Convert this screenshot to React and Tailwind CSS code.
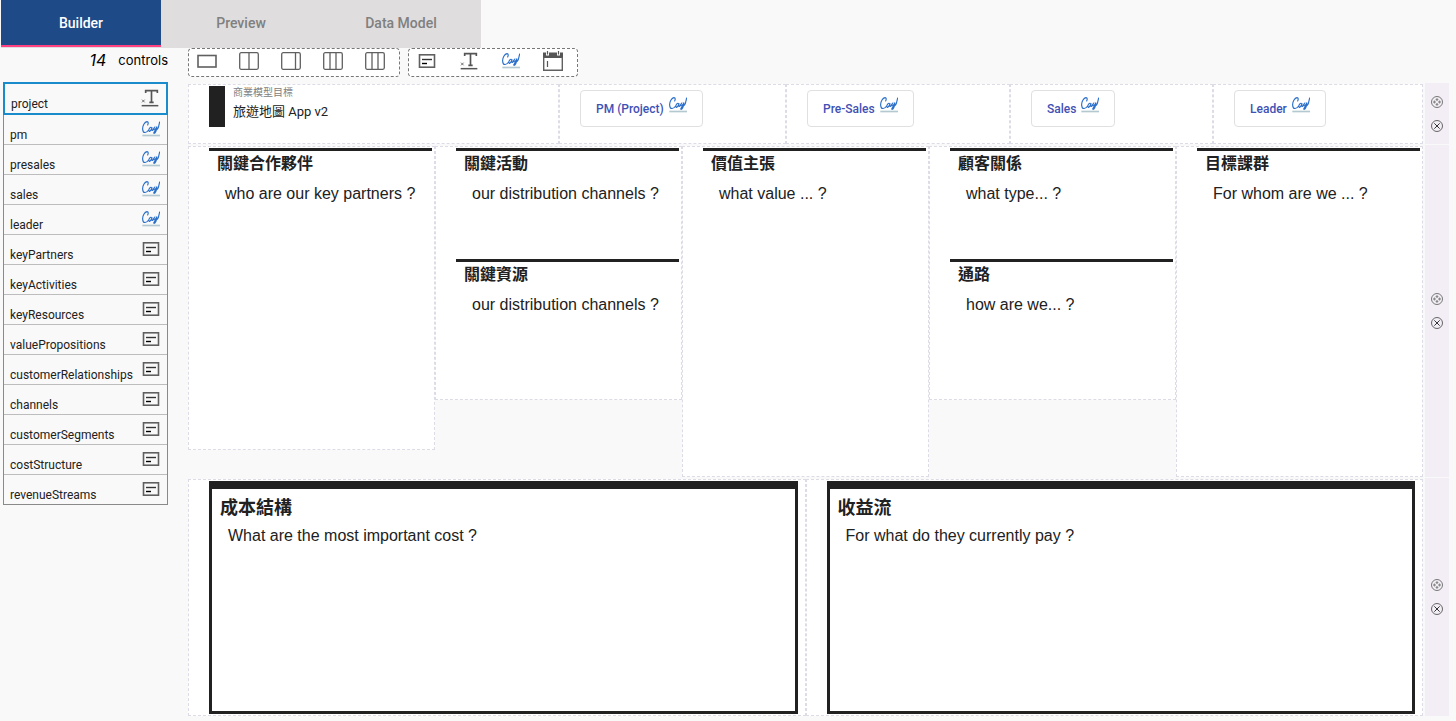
import React, { useState } from 'react'

const SignIcon = () => (
  <svg width="18" height="16" viewBox="0 0 54 48" fill="none">
    <path d="M17 12 C19 8 20 2 15 2 C8 3 1 14 2 25 C3 37 12 38 20 27 M30 20 C25 16 19 24 21 30 C23 34 28 27 30 20 C29 27 29 30 32 28 C34 26 35 22 37 20 C35 27 37 28 40 25 L45 17 C44 25 40 37 36 37 C33 36 39 29 43 27 C46 25 48 23 49 20 M53 3 L49 20" stroke="#2a6fc9" strokeWidth="3.400" strokeLinecap="round" />
    <path d="M1 43.500 H54" stroke="#b3c8cf" strokeWidth="5" />
  </svg>
)

const TextIcon = () => (
  <svg width="18" height="18" viewBox="0 0 54 54" fill="none" stroke="#555">
    <path d="M14 12 V5 H49 V12 M31.500 5 V40 M25 40 H38" strokeWidth="5" />
    <path d="M3 32 L11 40 M11 32 L3 40" strokeWidth="2.500" />
    <path d="M2 50 H52" strokeWidth="4.500" />
  </svg>
)

const AreaIcon = () => (
  <svg width="18" height="14" viewBox="0 0 18 14" fill="none">
    <rect x="1.500" y="0.800" width="15" height="12.400" stroke="#606060" strokeWidth="1.600" />
    <path d="M4 5.500 H14" stroke="#333" strokeWidth="1.400" />
    <path d="M4 9.500 H9" stroke="#000" strokeWidth="1.400" />
  </svg>
)

const DateIcon = () => (
  <svg width="20" height="20" viewBox="0 0 20 20" fill="none">
    <path d="M0 1.500 H3 V4.500 H6 V1.500 H14 V4.500 H17 V1.500 H20 V7 H0 Z" fill="#555" />
    <path d="M0.700 6 V19.300 H19.300 V6" stroke="#606060" strokeWidth="1.400" />
    <path d="M4.500 0 V3.500 M15.500 0 V3.500 M4.500 10 V16" stroke="#555" strokeWidth="1.200" />
  </svg>
)

const LayoutIcon = ({ lines, small }) => (
  <svg width="20" height="18" viewBox="0 0 20 18" fill="none" stroke="#606060" strokeWidth="1.300">
    {small
      ? <rect x="1" y="3.500" width="18" height="11.500" strokeWidth="1.600" />
      : <rect x="0.700" y="0.700" width="18.600" height="16.600" rx="1.500" />}
    {lines.map(x => <path key={x} d={`M${x} 1 V17`} />)}
  </svg>
)

const MoveIcon = () => (
  <svg width="12" height="12" viewBox="0 0 36 36" fill="none" stroke="#777">
    <circle cx="18" cy="18" r="16.500" strokeWidth="3" />
    <path d="M18 6 L23 11 L18 15 L13 11 Z M18 21 L23 25 L18 30 L13 25 Z M10 13 L15 18 L10 23 L6 18 Z M26 13 L30 18 L26 23 L21 18 Z" fill="#888" stroke="none" />
  </svg>
)

const RemoveIcon = () => (
  <svg width="12" height="12" viewBox="0 0 36 36" fill="none">
    <circle cx="18" cy="18" r="16.500" stroke="#666" strokeWidth="3" />
    <path d="M10 10 L26 26 M26 10 L10 26" stroke="#333" strokeWidth="3" />
  </svg>
)

const ICONS = { text: TextIcon, sign: SignIcon, area: AreaIcon, date: DateIcon }

const controls = [
  { name: 'project', type: 'text' },
  { name: 'pm', type: 'sign' },
  { name: 'presales', type: 'sign' },
  { name: 'sales', type: 'sign' },
  { name: 'leader', type: 'sign' },
  { name: 'keyPartners', type: 'area' },
  { name: 'keyActivities', type: 'area' },
  { name: 'keyResources', type: 'area' },
  { name: 'valuePropositions', type: 'area' },
  { name: 'customerRelationships', type: 'area' },
  { name: 'channels', type: 'area' },
  { name: 'customerSegments', type: 'area' },
  { name: 'costStructure', type: 'area' },
  { name: 'revenueStreams', type: 'area' },
]

const layouts = [
  { name: 'One column', lines: [], small: true },
  { name: 'Two columns', lines: [10] },
  { name: 'Main and side', lines: [14.5] },
  { name: 'Three columns', lines: [7, 13] },
  { name: 'Four columns', lines: [7, 13] },
]

const signers = ['PM (Project)', 'Pre-Sales', 'Sales', 'Leader']

const columns = [
  [{ id: 'keyPartners', title: '關鍵合作夥伴', text: 'who are our key partners ?', height: 'h-[273px]' }],
  [
    { id: 'keyActivities', title: '關鍵活動', text: 'our distribution channels ?', height: 'h-[83px]' },
    { id: 'keyResources', title: '關鍵資源', text: 'our distribution channels ?', height: 'h-[112px]' },
  ],
  [{ id: 'valuePropositions', title: '價值主張', text: 'what value ... ?', height: 'h-[300px]' }],
  [
    { id: 'customerRelationships', title: '顧客關係', text: 'what type... ?', height: 'h-[83px]' },
    { id: 'channels', title: '通路', text: 'how are we... ?', height: 'h-[112px]' },
  ],
  [{ id: 'customerSegments', title: '目標課群', text: 'For whom are we ... ?', height: 'h-[300px]' }],
]

const boxes = [
  { id: 'costStructure', title: '成本結構', text: 'What are the most important cost ?' },
  { id: 'revenueStreams', title: '收益流', text: 'For what do they currently pay ?' },
]

const Cell = ({ className = '', children }) => (
  <div className={`min-w-0 border border-dashed border-[#dcdce6] bg-white pl-5 pt-px ${className}`}>{children}</div>
)

const Row = ({ children }) => (
  <div className="flex gap-[2px]">
    <div className="min-w-0 flex-1 pt-px">{children}</div>
    <div className="flex w-6 flex-col items-center justify-center gap-3 bg-[#f3eef5]">
      <button aria-label="Move row"><MoveIcon /></button>
      <button aria-label="Remove row"><RemoveIcon /></button>
    </div>
  </div>
)

export default function App() {
  const [tab, setTab] = useState('Builder')
  const [selected, setSelected] = useState('project')

  return (
    <div className="min-h-screen bg-[#f9f9f9] font-[Roboto,'Noto_Sans_CJK_TC',sans-serif] text-[#212121]">
      <nav className="flex pl-px">
        {['Builder', 'Preview', 'Data Model'].map(t => (
          <button key={t} onClick={() => setTab(t)}
            className={`h-12 w-40 border-b border-[#dfdddd] bg-[#dfdddd] text-sm font-medium ${tab === t ? 'text-white' : 'text-[#808080]'}`}>
            <span className={`flex h-full items-center justify-center border-b-2 ${tab === t ? 'border-[#ff4081] bg-[#1e4a88]' : 'border-transparent'}`}>{t}</span>
          </button>
        ))}
      </nav>

      <div className="flex gap-5">
        {/* Control list */}
        <aside className="w-[168px] shrink-0 pl-[3px]">
          <p className="flex h-[34px] justify-end gap-3 font-[Inter,sans-serif] text-[13px] leading-6 text-black">
            <span className="text-base italic leading-6">{controls.length}</span>controls
          </p>
          <ul className="border border-t-0 border-[#8a8a8a]">
            {controls.map(c => {
              const Icon = ICONS[c.type]
              const active = selected === c.name
              return (
                <li key={c.name} className={active ? '-mx-px' : 'border-b border-[#bdbdbd] last:border-0'}>
                  <button onClick={() => setSelected(c.name)}
                    className={`flex w-full items-start justify-between text-left text-xs ${active ? 'h-[33px] border-2 border-[#1a8ccb] pl-1.5 pr-[7px] pt-1' : 'h-[29px] pl-1.5 pr-[7px]'}`}>
                    <span className={active ? 'pt-2 leading-4' : 'pt-3 leading-4'}>{c.name}</span>
                    <span className={active ? 'pt-px' : c.type === 'area' ? 'pt-[7px]' : 'pt-1.5'}><Icon /></span>
                  </button>
                </li>
              )
            })}
          </ul>
        </aside>

        {/* Canvas */}
        <main className="min-w-0 flex-1 pr-[7px]">
          <div className="mb-1.5 flex gap-2">
            <div className="flex h-[29px] rounded border border-dashed border-[#777] bg-white pb-[3px]">
              {layouts.map(l => (
                <button key={l.name} aria-label={l.name} className="mr-1.5 flex w-9 items-center justify-center">
                  <LayoutIcon lines={l.lines} small={l.small} />
                </button>
              ))}
            </div>
            <div className="flex h-[29px] rounded border border-dashed border-[#777] bg-white pb-[3px]">
              {['area', 'text', 'sign', 'date'].map(type => {
                const Icon = ICONS[type]
                return (
                  <button key={type} aria-label={`Add ${type}`} className="mr-1.5 flex w-9 items-center justify-center"><Icon /></button>
                )
              })}
            </div>
          </div>

          <div className="flex flex-col gap-px">
            <Row>
              <div className="grid grid-cols-[371fr_227fr_224fr_203fr_210fr]">
                <Cell className="h-[60px]">
                  <div className="flex h-[41px] border-l-16 border-[#212121] pl-2">
                    <div className="min-w-0 flex-1">
                      <label htmlFor="project" className="block text-[10px] leading-[14px] text-[#808080]">商業模型目標</label>
                      <input id="project" defaultValue="旅遊地圖 App v2" className="block h-5 w-full text-[13px] outline-none" />
                    </div>
                  </div>
                </Cell>
                {signers.map(s => (
                  <Cell key={s} className="h-[60px]">
                    <button className="mt-1 flex h-[37px] gap-[5px] rounded border border-[#e0e0e0] px-[15px] text-xs font-medium text-[#3f51b5]">
                      <span className="pt-[9px] leading-[18px]">{s}</span>
                      <span className="pt-1.5"><SignIcon /></span>
                    </button>
                  </Cell>
                ))}
              </div>
            </Row>

            <Row>
              <div className="grid grid-cols-5 items-start">
                {columns.map((sections, i) => (
                  <Cell key={i} className="pr-[2px]">
                    {sections.map(s => (
                      <section key={s.id} className="border-t-3 border-[#212121]">
                        <label htmlFor={s.id} className="block pl-2 pt-px text-base font-bold">{s.title}</label>
                        <textarea id={s.id} defaultValue={s.text}
                          className={`block w-full resize-none pl-4 pt-1.5 font-['Liberation_Sans',sans-serif] text-base outline-none ${s.height}`} />
                      </section>
                    ))}
                  </Cell>
                ))}
              </div>
            </Row>

            <Row>
              <div className="grid grid-cols-2">
                {boxes.map(b => (
                  <Cell key={b.id} className="pb-px pr-[7px]">
                    <section className="border-3 border-t-8 border-[#212121] pl-2 pt-[7px]">
                      <label htmlFor={b.id} className="block text-lg leading-6 font-bold">{b.title}</label>
                      <textarea id={b.id} defaultValue={b.text}
                        className="block h-[191px] w-full resize-none pl-2 pt-1 font-['Liberation_Sans',sans-serif] text-base outline-none" />
                    </section>
                  </Cell>
                ))}
              </div>
            </Row>
          </div>
        </main>
      </div>
    </div>
  )
}
